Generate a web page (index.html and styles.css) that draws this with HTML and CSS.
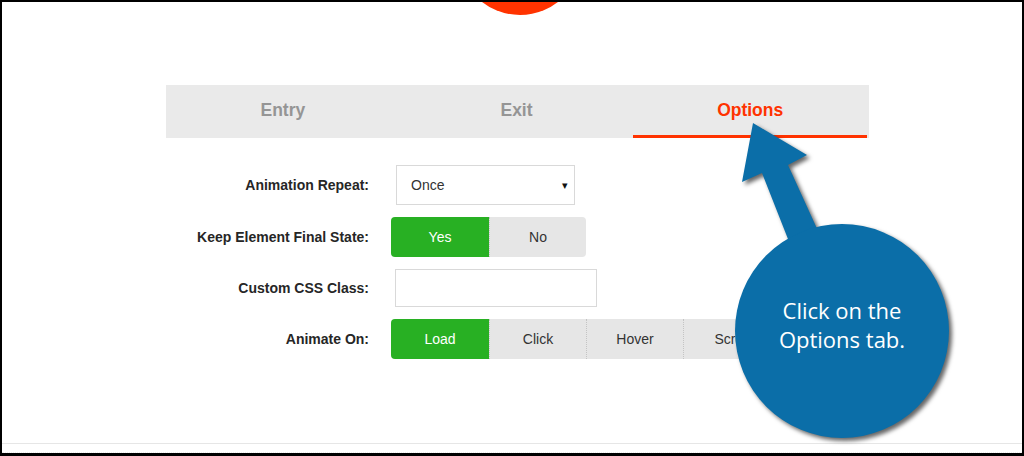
FILE: index.html
```html
<!DOCTYPE html>
<html lang="en">
<head>
<meta charset="utf-8">
<title>Options tab</title>
<link rel="stylesheet" href="styles.css">
</head>
<body>
<div class="frame">
  <div class="logo-dot"></div>

  <div class="tabs">
    <div class="tab">Entry</div>
    <div class="tab">Exit</div>
    <div class="tab active">Options</div>
  </div>

  <div class="form">
    <div class="lbl">Animation Repeat:</div>
    <div class="select"><span>Once</span><span class="caret">&#9662;</span></div>

    <div class="lbl">Keep Element Final State:</div>
    <div class="group">
      <div class="btn on">Yes</div>
      <div class="btn">No</div>
    </div>

    <div class="lbl">Custom CSS Class:</div>
    <div class="input"></div>

    <div class="lbl">Animate On:</div>
    <div class="group">
      <div class="btn on">Load</div>
      <div class="btn">Click</div>
      <div class="btn">Hover</div>
      <div class="btn">Scroll</div>
    </div>
  </div>

  <div class="footer"></div>

  <svg class="callout" width="1024" height="456" viewBox="0 0 1024 456" xmlns="http://www.w3.org/2000/svg">
    <g class="callout-shape">
      <polygon points="753,123 807,155 788,165 845,290 812,300 762,173 742,182"/>
      <circle cx="842" cy="331" r="107"/>
    </g>
    <text class="callout-text" x="842" y="319">Click on the</text>
    <text class="callout-text" x="842" y="348">Options tab.</text>
  </svg>
</div>
</body>
</html>
```
FILE: styles.css
```css
* { box-sizing: border-box; }

html, body {
  margin: 0;
  padding: 0;
  background: #ffffff;
}

body {
  font-family: "Liberation Sans", Arial, sans-serif;
  color: #333333;
}

.frame {
  position: relative;
  width: 1024px;
  height: 456px;
  border: 2px solid #000000;
  border-bottom-width: 3px;
  overflow: hidden;
  display: flex;
  flex-direction: column;
}

.logo-dot {
  width: 124px;
  height: 124px;
  border-radius: 50%;
  background: #ff3300;
  margin-top: -111px;
  margin-left: 456px;
  flex: none;
}

.tabs {
  margin-top: 70px;
  margin-left: 164px;
  width: 703px;
  height: 53px;
  background: #eaeaea;
  display: flex;
  flex: none;
}

.tab {
  flex: 1;
  display: flex;
  align-items: center;
  justify-content: center;
  font-size: 17.5px;
  font-weight: bold;
  color: #959595;
  border-bottom: 3px solid transparent;
  padding-top: 1px;
}

.tab.active {
  color: #ff3300;
  border-bottom-color: #ff3300;
  margin-right: 2px;
}

.form {
  margin-top: 27px;
  margin-left: 164px;
  width: 703px;
  display: grid;
  grid-template-columns: 203px 1fr;
  column-gap: 22px;
  row-gap: 12px;
  align-items: center;
  flex: none;
}

.lbl {
  text-align: right;
  font-size: 14px;
  font-weight: bold;
  color: #262626;
}

.select {
  margin-left: 5px;
  width: 179px;
  height: 40px;
  border: 1px solid #d9d9d9;
  background: #ffffff;
  display: flex;
  align-items: center;
  justify-content: space-between;
  padding: 0 6px 0 14px;
  font-size: 14px;
  color: #333333;
}

.caret {
  font-size: 11px;
  color: #111111;
}

.input {
  margin-left: 4px;
  width: 202px;
  height: 38px;
  border: 1px solid #d9d9d9;
  background: #ffffff;
}

.group {
  display: flex;
  height: 40px;
}

.btn {
  width: 97px;
  height: 40px;
  display: flex;
  align-items: center;
  justify-content: center;
  font-size: 14px;
  color: #333333;
  background: #e6e6e6;
  border-left: 1px dotted #c4c4c4;
}

.btn:first-child {
  width: 98px;
  border-left: none;
  border-radius: 4px 0 0 4px;
}

.btn:last-child {
  border-radius: 0 4px 4px 0;
}

.btn.on {
  background: #28b023;
  color: #ffffff;
}

.footer {
  margin-top: auto;
  height: 10px;
  border-top: 1px solid #e6e6e6;
  border-bottom: 1px dotted #ececec;
  flex: none;
}

.callout {
  position: absolute;
  left: -2px;
  top: -2px;
  pointer-events: none;
}

.callout-shape {
  fill: #0b6ea8;
  filter: drop-shadow(3px 3px 2px rgba(0, 0, 0, 0.6));
}

.callout-text {
  fill: #ffffff;
  font-family: "Open Sans", "DejaVu Sans", sans-serif;
  font-size: 22px;
  text-anchor: middle;
}
```
